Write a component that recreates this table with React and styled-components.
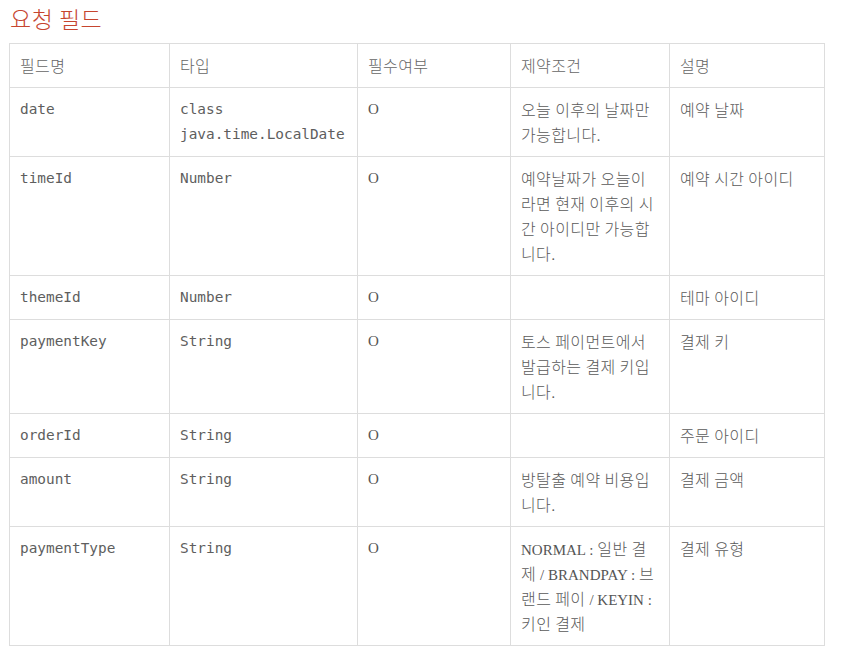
import React from "react";
import styled, { createGlobalStyle, css } from "styled-components";

const Global = createGlobalStyle`
  html, body { margin: 0; padding: 0; background: #fff; }
  body { font-family: "Noto Sans CJK KR", sans-serif; color: #555; }
`;

const Page = styled.div`
  padding: 3px 18px 0 9px;
`;

const Title = styled.h2`
  margin: 0 0 10px 1px;
  font-family: "Noto Sans CJK KR", sans-serif;
  font-weight: 300;
  font-size: 23px;
  letter-spacing: 0.5px;
  line-height: 30px;
  color: #c6452f;
`;

const Table = styled.table`
  border-collapse: collapse;
  table-layout: fixed;
  width: 815px;
`;

const koText = css`
  font-family: "Noto Sans CJK KR", sans-serif;
  font-size: 16px;
  font-weight: 300;
  letter-spacing: 0.4px;
`;

const Th = styled.th`
  border: 1px solid #ddd;
  padding: 9px 10px;
  text-align: left;
  ${koText};
  line-height: 25px;
  color: #666;
  vertical-align: top;
`;

const kinds = {
  mono: css`
    font-family: "DejaVu Sans Mono", monospace;
    font-size: 14.4px;
    color: #5e5e5e;
  `,
  serif: css`
    font-family: "Liberation Serif", serif;
    font-size: 15px;
    color: #555;
  `,
  text: css`
    ${koText};
    color: #5a5a5a;
  `,
};

const Td = styled.td`
  border: 1px solid #ddd;
  padding: 9px 10px;
  vertical-align: top;
  line-height: 25px;
  ${(p) => kinds[p.$kind || "text"]};
`;

const Latin = styled.span`
  font-family: "Liberation Serif", serif;
  font-size: 15px;
  font-weight: 400;
  letter-spacing: 0;
  line-height: 1;
  color: #555;
`;

const Syl = styled.span``;

const LATIN = /([A-Za-z0-9/:]+(?:[ ]+[A-Za-z0-9/:]+)*)/;

function Text({ children }) {
  const parts = String(children).split(LATIN);
  if (parts.length === 1) return parts[0];
  return parts.map((p, i) =>
    i % 2 === 1 ? (
      <Latin key={i}>{p}</Latin>
    ) : (
      <React.Fragment key={i}>
        {Array.from(p).map((ch, j) =>
          ch === " " ? " " : <Syl key={j}>{ch}</Syl>
        )}
      </React.Fragment>
    )
  );
}

const widths = [160, 188, 153, 159, 155];
const headers = ["필드명", "타입", "필수여부", "제약조건", "설명"];

const rows = [
  ["date", "class java.time.LocalDate", "O", "오늘 이후의 날짜만 가능합니다.", "예약 날짜"],
  ["timeId", "Number", "O", "예약날짜가 오늘이라면 현재 이후의 시간 아이디만 가능합니다.", "예약 시간 아이디"],
  ["themeId", "Number", "O", "", "테마 아이디"],
  ["paymentKey", "String", "O", "토스 페이먼트에서 발급하는 결제 키입니다.", "결제 키"],
  ["orderId", "String", "O", "", "주문 아이디"],
  ["amount", "String", "O", "방탈출 예약 비용입니다.", "결제 금액"],
  ["paymentType", "String", "O", "NORMAL : 일반 결제 / BRANDPAY : 브랜드 페이 / KEYIN : 키인 결제", "결제 유형"],
];

export default function App() {
  return (
    <Page>
      <Global />
      <Title>요청 필드</Title>
      <Table>
        <colgroup>
          {widths.map((w, i) => (
            <col key={i} style={{ width: w }} />
          ))}
        </colgroup>
        <thead>
          <tr>
            {headers.map((h) => (
              <Th key={h}>{h}</Th>
            ))}
          </tr>
        </thead>
        <tbody>
          {rows.map((r) => (
            <tr key={r[0]}>
              <Td $kind="mono">{r[0]}</Td>
              <Td $kind="mono">{r[1]}</Td>
              <Td $kind="serif">{r[2]}</Td>
              <Td>
                <Text>{r[3]}</Text>
              </Td>
              <Td>
                <Text>{r[4]}</Text>
              </Td>
            </tr>
          ))}
        </tbody>
      </Table>
    </Page>
  );
}
